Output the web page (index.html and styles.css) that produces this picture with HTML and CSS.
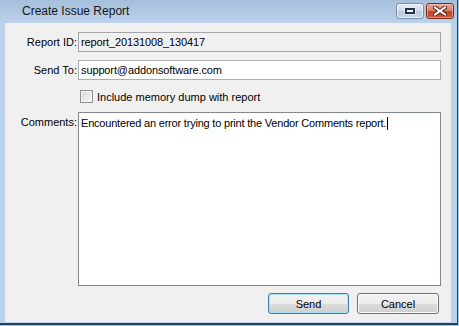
FILE: index.html
```html
<!DOCTYPE html>
<html lang="en">
  <head>
    <meta charset="UTF-8" />
    <title>Create Issue Report</title>
    <link rel="stylesheet" href="styles.css">
  </head>
  <body>
    <div class="window">
      <!-- Title bar -->
      <div class="titlebar">
        <span class="title">Create Issue Report</span>
        <div class="controls">
          <span class="ctl restore">
            <svg width="12" height="8" viewBox="0 0 12 8">
              <rect x="0.5" y="0.5" width="11" height="7" fill="#f4f7fb" />
              <rect x="2" y="2" width="8" height="4" fill="none" stroke="#26344e" stroke-width="2" />
            </svg>
          </span>
          <span class="ctl close">
            <svg width="14" height="10" viewBox="0 0 14 10">
              <path d="M2 1.5 L12 8.5 M12 1.5 L2 8.5" stroke="#5a2418" stroke-width="4" stroke-linecap="square" />
              <path d="M2 1.5 L12 8.5 M12 1.5 L2 8.5" stroke="#ffffff" stroke-width="2" stroke-linecap="square" />
            </svg>
          </span>
        </div>
      </div>

      <!-- Dialog content -->
      <div class="client">
        <div class="row first">
          <label class="lbl">Report ID:</label>
          <div class="field readonly">report_20131008_130417</div>
        </div>
        <div class="row">
          <label class="lbl">Send To:</label>
          <div class="field">support@addonsoftware.com</div>
        </div>
        <div class="row check-row">
          <span class="box"></span>
          <span>Include memory dump with report</span>
        </div>
        <div class="row memo-row">
          <label class="lbl">Comments:</label>
          <div class="memo">Encountered an error trying to print the Vendor Comments report.<span class="caret"></span></div>
        </div>
        <div class="buttons">
          <button class="btn default">Send</button>
          <button class="btn cancel">Cancel</button>
        </div>
      </div>
    </div>
  </body>
</html>
```

FILE: styles.css
```css
html, body {
  margin: 0;
  padding: 0;
}

body {
  background-color: #8fcbe2;
  font-family: "Liberation Sans", Arial, sans-serif;
  font-size: 11px;
  color: #000;
}

/* Window frame */
.window {
  box-sizing: border-box;
  width: 458px;
  height: 325px;
  display: flex;
  flex-direction: column;
  background: linear-gradient(to bottom, #a6bfdc 0, #bcd2ea 23px, #bad2ed 100%);
  border-right: 1px solid #2c4260;
  border-bottom: 2px solid #25435c;
}

.titlebar {
  height: 23px;
  flex-shrink: 0;
  display: flex;
  justify-content: space-between;
  align-items: flex-start;
  padding: 0 3px 0 22px;
}

.title {
  font-size: 12px;
  color: #141414;
  padding-top: 4px;
}

.controls {
  display: flex;
  gap: 2px;
  padding-top: 3px;
}

.ctl {
  box-sizing: border-box;
  height: 16px;
  display: flex;
  align-items: center;
  justify-content: center;
  border-radius: 3px;
}

.restore {
  width: 28px;
  border: 1px solid #7d8ea8;
  background: linear-gradient(to bottom, #e3ebf5 0%, #cfdbea 50%, #b8cadf 51%, #c6d6e9 100%);
  box-shadow: inset 0 0 0 1px rgba(255, 255, 255, 0.6);
}

.close {
  width: 28px;
  border: 1px solid #6e2c20;
  background: linear-gradient(to bottom, #e8a896 0%, #d98370 45%, #c4432d 55%, #cf5a3e 100%);
  box-shadow: inset 0 0 0 1px rgba(255, 210, 200, 0.5);
}

/* Client area */
.client {
  flex-grow: 1;
  margin: 0 6px 1px 5px;
  background-color: #f0f0f0;
  display: flex;
  flex-direction: column;
}

.row {
  display: flex;
  align-items: center;
  margin-top: 8px;
}

.row.first {
  margin-top: 9px;
}

.lbl {
  width: 72px;
  padding-right: 1px;
  text-align: right;
  flex-shrink: 0;
}

.field {
  box-sizing: border-box;
  width: 363px;
  height: 20px;
  line-height: 18px;
  padding-left: 2px;
  border: 1px solid #abadb3;
  background-color: #fff;
  white-space: nowrap;
  letter-spacing: -0.12px;
}

.field.readonly {
  background-color: #f0f0f0;
  border-color: #a6a6a6;
}

.check-row {
  margin-top: 10px;
  height: 13px;
  padding-left: 75px;
}

.box {
  box-sizing: border-box;
  width: 13px;
  height: 13px;
  margin-right: 4px;
  border: 1px solid #8e8f8f;
  background: linear-gradient(135deg, #d3d3d3 0%, #ebebeb 60%, #f9f9f9 100%);
  box-shadow: inset 0 0 0 1px #f4f4f4;
}

.memo-row {
  align-items: flex-start;
  margin-top: 9px;
}

.memo-row .lbl {
  padding-top: 4px;
  line-height: 13px;
}

.memo {
  box-sizing: border-box;
  width: 363px;
  height: 174px;
  padding: 4px 2px;
  line-height: 13px;
  border: 1px solid #828790;
  background-color: #fff;
  letter-spacing: -0.2px;
}

.caret {
  display: inline-block;
  width: 1px;
  height: 13px;
  margin-left: 1px;
  vertical-align: -3px;
  background-color: #000;
}

/* Buttons */
.buttons {
  display: flex;
  justify-content: flex-end;
  gap: 8px;
  margin-top: 7px;
  padding-right: 12px;
}

.btn {
  box-sizing: border-box;
  width: 81px;
  height: 21px;
  padding: 0;
  font-family: "Liberation Sans", Arial, sans-serif;
  font-size: 11px;
  color: #000;
  border: 1px solid #707070;
  border-radius: 3px;
  background: linear-gradient(to bottom, #f2f2f2 0%, #ebebeb 50%, #dddddd 51%, #cfcfcf 100%);
  box-shadow: inset 0 0 0 1px #fcfcfc;
}

.btn.cancel {
  width: 82px;
}

.btn.default {
  border-color: #3c7fb1;
  box-shadow: inset 0 0 0 1px #a9e1f7;
}
```
